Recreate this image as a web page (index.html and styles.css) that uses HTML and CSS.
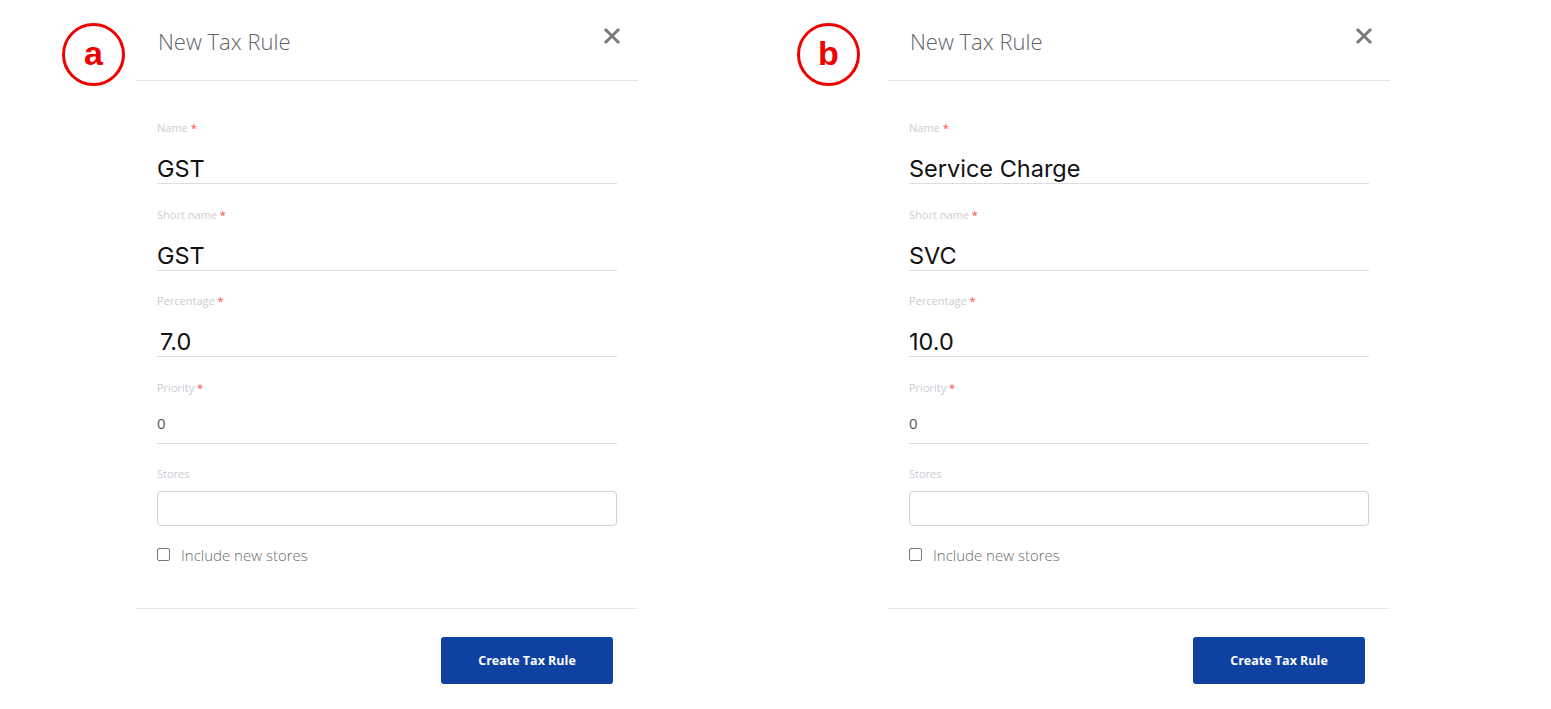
FILE: index.html
```html
<!DOCTYPE html>
<html>
<head>
<meta charset="utf-8">
<link rel="stylesheet" href="styles.css">
</head>
<body>
<div class="page">
  <section class="panel">
    <div class="badge badge-a">a</div>
    <header class="panel-head">
      <h2 class="title">New Tax Rule</h2>
      <span class="close"><svg width="18" height="18" viewBox="0 0 18 18"><path d="M3 3L15 15M15 3L3 15" stroke="#7a7a7a" stroke-width="3" stroke-linecap="square"/></svg></span>
    </header>
    <div class="panel-body">
      <div class="field"><div class="label">Name <span class="req">*</span></div><div class="input">GST</div></div>
      <div class="field"><div class="label">Short name <span class="req">*</span></div><div class="input">GST</div></div>
      <div class="field"><div class="label">Percentage <span class="req">*</span></div><div class="input indent">7.0</div></div>
      <div class="field"><div class="label">Priority <span class="req">*</span></div><div class="input small">0</div></div>
      <div class="field"><div class="label">Stores</div><div class="box"></div></div>
      <div class="check"><span class="cb"></span><span>Include new stores</span></div>
    </div>
    <footer class="panel-foot"><button class="btn">Create Tax Rule</button></footer>
  </section>
  <section class="panel">
    <div class="badge badge-b">b</div>
    <header class="panel-head">
      <h2 class="title">New Tax Rule</h2>
      <span class="close"><svg width="18" height="18" viewBox="0 0 18 18"><path d="M3 3L15 15M15 3L3 15" stroke="#7a7a7a" stroke-width="3" stroke-linecap="square"/></svg></span>
    </header>
    <div class="panel-body">
      <div class="field"><div class="label">Name <span class="req">*</span></div><div class="input">Service Charge</div></div>
      <div class="field"><div class="label">Short name <span class="req">*</span></div><div class="input">SVC</div></div>
      <div class="field"><div class="label">Percentage <span class="req">*</span></div><div class="input">10.0</div></div>
      <div class="field"><div class="label">Priority <span class="req">*</span></div><div class="input small">0</div></div>
      <div class="field"><div class="label">Stores</div><div class="box"></div></div>
      <div class="check"><span class="cb"></span><span>Include new stores</span></div>
    </div>
    <footer class="panel-foot"><button class="btn">Create Tax Rule</button></footer>
  </section>
</div>
</body>
</html>
```
FILE: styles.css
```css
* { box-sizing: border-box; }
html, body { margin: 0; background: #fff; }
body { font-family: "Open Sans", "Noto Sans", sans-serif; }
.page { display: flex; gap: 250px; padding-left: 136px; }
.panel { position: relative; width: 502px; }
.badge {
  position: absolute; top: 23px; width: 63px; height: 63px;
  border: 3px solid #f00000; border-radius: 50%;
  display: flex; align-items: center; justify-content: center;
  color: #f00000; font: bold 34px/1 "Liberation Sans", Arial, sans-serif;
  padding-bottom: 3px;
}
.badge-a { left: -74px; }
.badge-b { left: -91px; }
.panel-head {
  height: 81px; border-bottom: 1px solid #e2e3ea;
  display: flex; align-items: flex-start; justify-content: space-between;
  padding: 0 17px 0 22px;
}
.title { margin: 26px 0 0; font-weight: 300; font-size: 22px; line-height: 30px; color: #5f6368; }
.close { margin-top: 27px; display: flex; }
.panel-body { padding: 39px 21px 43px; }
.field { margin-bottom: 22.5px; }
.label { font-size: 11px; line-height: 16px; color: #c9ccd3; }
.req { color: #f44; }
.input {
  height: 48px; border-bottom: 1px solid #dcdde2; padding-top: 17px;
  font-family: Inter, Roboto, "Liberation Sans", sans-serif; font-size: 23.5px; line-height: 31px; color: #111;
}
.input.indent { padding-left: 3px; }
.input.small { font-family: "Open Sans", sans-serif; font-size: 15px; color: #555; padding-top: 12px; }
.box { margin-top: 9px; height: 35px; border: 1px solid #cfd0d4; border-radius: 4px; }
.check { display: flex; align-items: center; gap: 11px; margin-top: -4px; font-size: 15px; font-weight: 300; color: #6b6b6b; line-height: 20px; }
.cb { width: 13px; height: 13px; border: 1px solid #777; border-radius: 2px; }
.panel-foot { border-top: 1px solid #e8e9ee; padding: 28px 25px 0 0; display: flex; justify-content: flex-end; }
.btn {
  width: 172px; height: 47px; border: 0; border-radius: 3px; background: #0f41a0; padding-top: 1px;
  color: #fff; font-family: "Open Sans", sans-serif; font-weight: 700; font-size: 12.5px; cursor: pointer;
}
```
